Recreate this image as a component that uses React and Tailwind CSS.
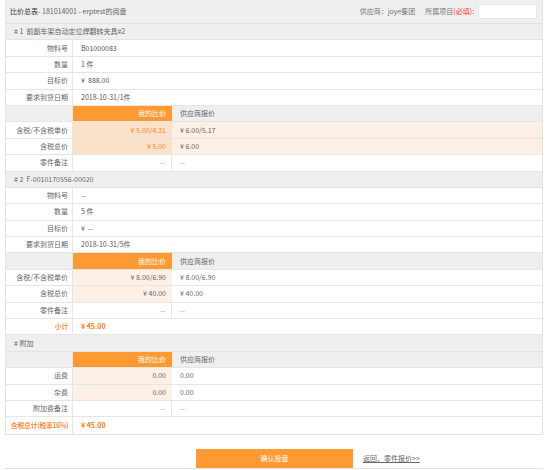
import React from "react";

const font = { fontFamily: '"Noto Sans CJK SC", "Noto Sans", sans-serif' };

const rowCls = "grid grid-cols-[67px_99px_1fr] h-[16.4px] border-b border-[#e6e6e6] items-stretch";

const Section = ({ title }) => (
  <div className="h-[16.4px] border-b border-[#e3e3e3] bg-[#efefef] flex items-center pl-[8px] text-[#666] whitespace-pre">
    {title}
  </div>
);

const Info = ({ label, value }) => (
  <div className={rowCls}>
    <div className="flex items-center justify-end pr-[4px] border-r border-[#e6e6e6] text-[#666]">{label}</div>
    <div className="col-span-2 flex items-center pl-[8px] text-[#555] whitespace-pre">{value}</div>
  </div>
);

const PriceHead = () => (
  <div className={rowCls}>
    <div className="bg-[#efefef] border-r border-[#e6e6e6]" />
    <div className="bg-[#ff9a33] flex items-center justify-end pr-[6px] text-white">我的比价</div>
    <div className="bg-[#efefef] flex items-center pl-[8px] text-[#666]">供应商报价</div>
  </div>
);

const Price = ({ label, mine, supplier, strong }) => (
  <div className={rowCls}>
    <div className="flex items-center justify-end pr-[4px] border-r border-[#e6e6e6] text-[#666]">{label}</div>
    <div
      className={
        strong
          ? "bg-[#fde2cb] flex items-center justify-end pr-[6px] text-[#ff8226]"
          : "bg-[#fdf0e6] flex items-center justify-end pr-[6px] text-[#666]"
      }
    >
      {mine}
    </div>
    <div
      className={
        strong
          ? "bg-[#fdefe4] flex items-center pl-[8px] text-[#666]"
          : "bg-white flex items-center pl-[8px] text-[#666]"
      }
    >
      {supplier}
    </div>
  </div>
);

const Note = ({ label }) => (
  <div className={rowCls}>
    <div className="flex items-center justify-end pr-[4px] border-r border-[#e6e6e6] text-[#666]">{label}</div>
    <div className="flex items-center justify-end pr-[6px] border-r border-[#e6e6e6] text-[#999]">--</div>
    <div className="flex items-center pl-[8px] text-[#999]">--</div>
  </div>
);

const Total = ({ label, value, last }) => (
  <div className={last ? "grid grid-cols-[67px_99px_1fr] h-[16.4px] items-stretch" : rowCls}>
    <div className="flex items-center justify-end pr-[4px] border-r border-[#e6e6e6] text-[#ff7a1a] font-medium whitespace-nowrap tracking-[-0.4px]">
      {label}
    </div>
    <div className="col-span-2 flex items-center pl-[8px] text-[#ff7a1a] font-bold">{value}</div>
  </div>
);

export default function App() {
  return (
    <div className="w-[554px] h-[470px] bg-white text-[7px] leading-none overflow-hidden" style={font}>
      <div className="pl-[5px] pr-[11px]">
        <div className="border-x border-b border-[#e3e3e3]">
          {/* Header */}
          <div className="h-[24px] bg-[#efefef] border-b border-[#e0e0e0] flex items-center pl-[4px] pr-[5px]">
            <div className="text-[#666]">
              <span className="text-[#333]">比价总表</span>- 181014001 - erptest的阅盘
            </div>
            <div className="ml-auto flex items-center text-[#777]">
              <span>供应商：joye集团</span>
              <span className="ml-[10px]">
                所属项目<span className="text-[#ff3333]">(必填)</span>:
              </span>
              <div className="ml-[4px] w-[59px] h-[15px] bg-white border border-[#e8e8e8]" />
            </div>
          </div>

          <Section title="# 1  前副车架自动定位焊翻转夹具#2" />
          <Info label="物料号" value="B01000083" />
          <Info label="数量" value="1 件" />
          <Info label="目标价" value="¥  888.00" />
          <Info label="要求到货日期" value="2018-10-31/1件" />
          <PriceHead />
          <Price label="含税/不含税单价" mine="¥ 5.00/4.31" supplier="¥ 6.00/5.17" strong />
          <Price label="含税总价" mine="¥ 5.00" supplier="¥ 6.00" strong />
          <Note label="零件备注" />

          <Section title="# 2  F-0010170556-00020" />
          <Info label="物料号" value="--" />
          <Info label="数量" value="5 件" />
          <Info label="目标价" value="¥  --" />
          <Info label="要求到货日期" value="2018-10-31/5件" />
          <PriceHead />
          <Price label="含税/不含税单价" mine="¥ 8.00/6.90" supplier="¥ 8.00/6.90" />
          <Price label="含税总价" mine="¥ 40.00" supplier="¥ 40.00" />
          <Note label="零件备注" />
          <Total label="小计" value="¥ 45.00" />

          <Section title="# 附加" />
          <PriceHead />
          <Price label="运费" mine="0.00" supplier="0.00" />
          <Price label="杂费" mine="0.00" supplier="0.00" />
          <Note label="附加费备注" />
          <Total label="含税总计(税率16%)" value="¥ 45.00" last />
        </div>

        {/* Footer actions */}
        <div className="mt-[14px] flex items-center border-b border-[#e3e3e3]">
          <div className="ml-[191px] w-[157px] h-[19px] bg-[#ff9a33] flex items-center justify-center text-white">
            确认投盘
          </div>
          <a className="ml-[10px] text-[#666] underline">返回，零件报价&gt;&gt;</a>
        </div>
      </div>
    </div>
  );
}
